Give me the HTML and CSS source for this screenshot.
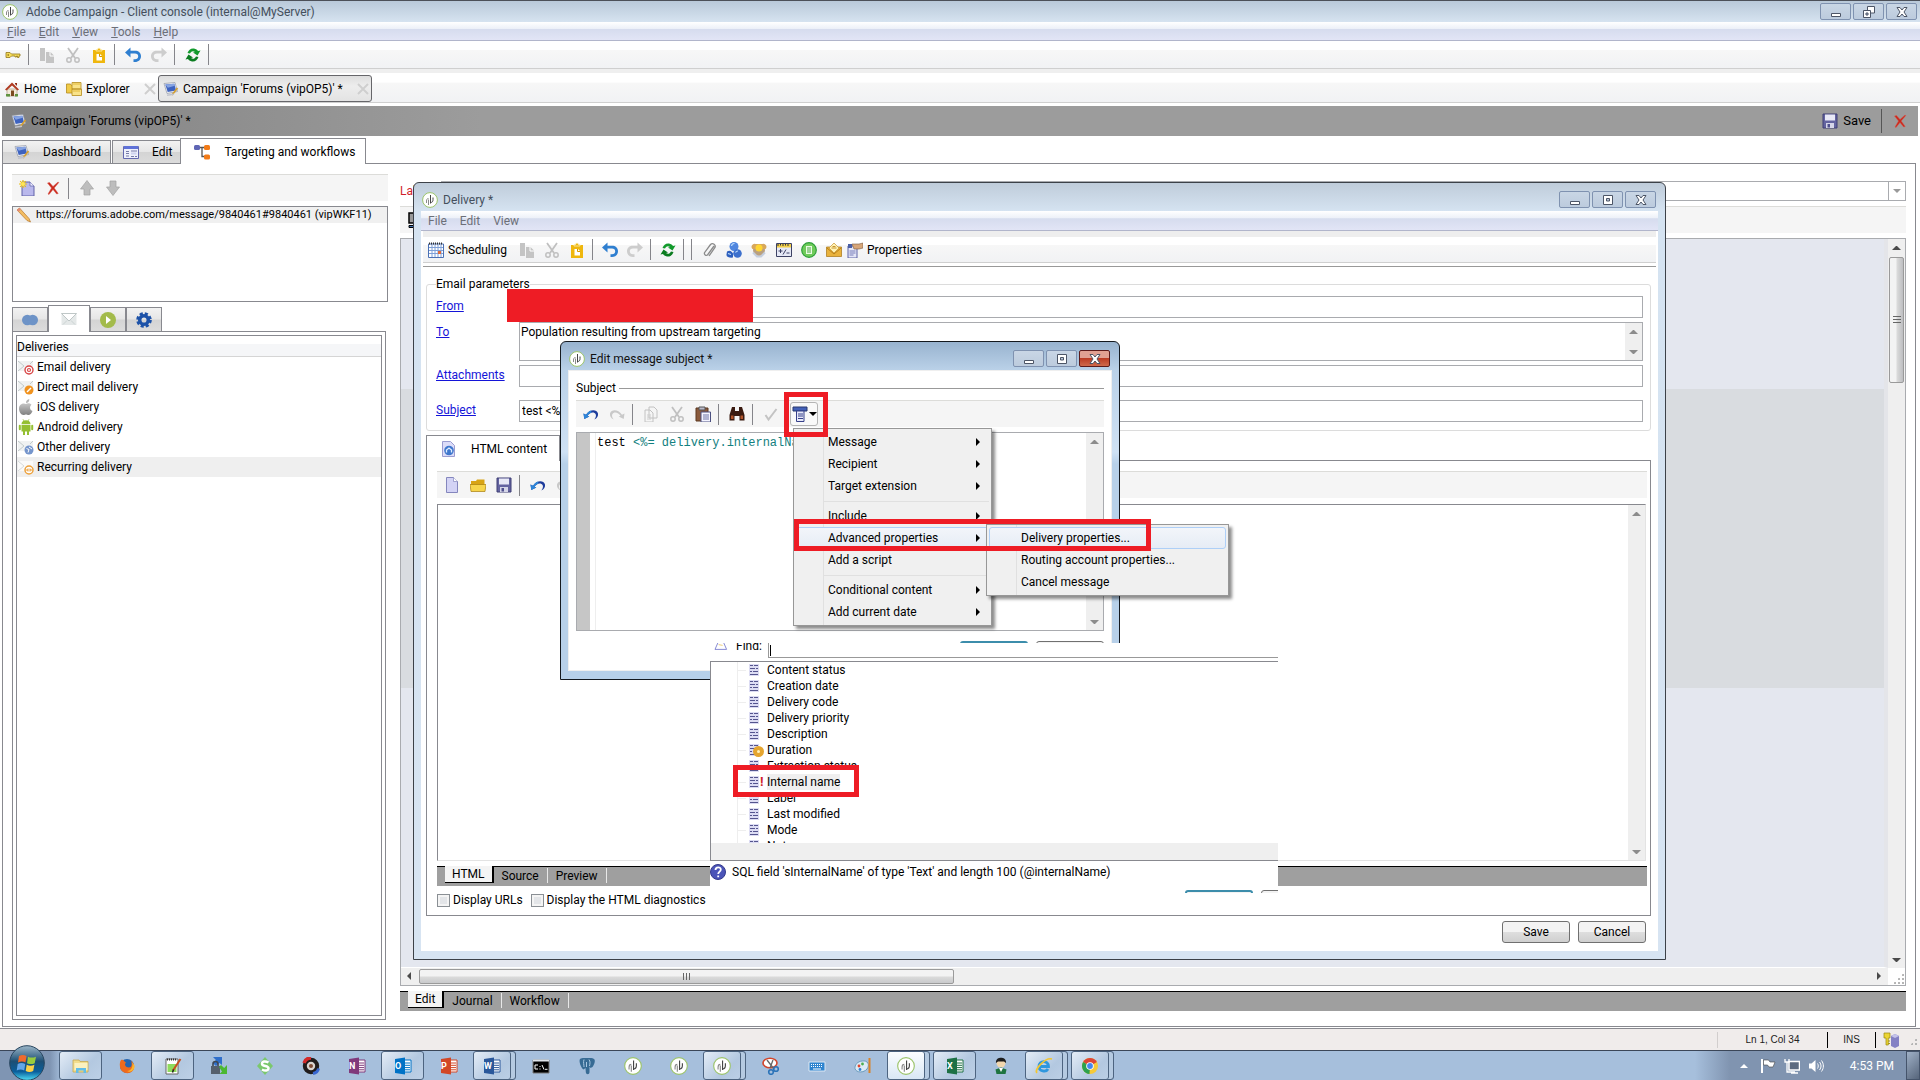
FILE: index.html
```html
<!DOCTYPE html>
<html lang="en">
<head>
    <meta charset="UTF-8">
    <title>Adobe Campaign - Client console</title>
    <link rel="stylesheet" href="styles.css">
</head>
<body>
    <svg class="sprite" aria-hidden="true">
        <defs>
            <linearGradient id="g-orb" x1="0" y1="0" x2="0" y2="1"><stop offset="0" stop-color="#9db7c9"/><stop offset=".45" stop-color="#1d4f74"/><stop offset=".75" stop-color="#0a5f9c"/><stop offset="1" stop-color="#4fe0f8"/></linearGradient>
            <linearGradient id="g-gray" x1="0" y1="0" x2="0" y2="1"><stop offset="0" stop-color="#c6c6c6"/><stop offset="1" stop-color="#808080"/></linearGradient>
        </defs>
        <symbol id="logo" viewBox="0 0 16 16"><circle cx="8" cy="8" r="7.4" fill="#fff" stroke="#9cc46a"/><path d="M8.500 3v8.500M8.500 10.500c2 0 2.500-1.200 2.500-3V5.500" fill="none" stroke="#444"/><path d="M6.500 13V7.500M6.500 6.500c-1.500 0-2 1-2 2.500v2" fill="none" stroke="#8a8a8a"/></symbol>
        <symbol id="key" viewBox="0 0 16 16"><path d="M1 5.500h4l1.500 1.500H15v2h-1v1.500h-1.500V9h-1v1h-1.500V9H6.500L5 10.500H1z" fill="#f5dc5a" stroke="#93761b" stroke-width=".8"/><path d="M2.500 7.300h1.500v1.500H2.500z" fill="#93761b"/></symbol>
        <symbol id="copy" viewBox="0 0 16 16"><path d="M1 1h5v13H1zM7 5h4.500L15 8.500V16H7z" fill="#c4c4c4"/><path d="M11 5v4h4" fill="none" stroke="#fff"/></symbol>
        <symbol id="cut" viewBox="0 0 16 16"><path d="M3 1l7 10M13 1L6 11" stroke="#c0c0c0" stroke-width="1.800"/><circle cx="4" cy="13" r="2.200" fill="none" stroke="#c0c0c0" stroke-width="1.500"/><circle cx="12" cy="13" r="2.200" fill="none" stroke="#c0c0c0" stroke-width="1.500"/></symbol>
        <symbol id="paste" viewBox="0 0 16 16"><path d="M2 3h12v13H2z" fill="#efb70e"/><path d="M5 4V2.500h1.500a1.500 1.500 0 0 1 3 0H11V4z" fill="#efb70e" stroke="#fff6cf" stroke-width=".7"/><path d="M5.500 7H9l2 2v4.500H5.500z" fill="#fff"/><path d="M8.500 7v2.500H11" fill="none" stroke="#d69a00"/></symbol>
        <symbol id="undo" viewBox="0 0 16 16"><path d="M0 5.500L5.500 .5v3.200H10c3.500 0 6 2 6 5.500 0 3.300-2.500 5.800-6 5.800H8.500v-2.800H10c2 0 3.200-1 3.200-2.900 0-1.800-1.200-2.700-3.200-2.700H5.500v3.900z" fill="#2f7fd0"/></symbol>
        <symbol id="redo" viewBox="0 0 16 16"><path d="M16 5.500L10.500.5v3.200H6c-3.500 0-6 2-6 5.500C0 12.500 2.500 15 6 15h1.500v-2.800H6c-2 0-3.200-1-3.200-2.900 0-1.800 1.200-2.700 3.200-2.700h4.500v3.900z" fill="#cdcdcd"/></symbol>
        <symbol id="refresh" viewBox="0 0 16 16"><path d="M2.500 6C3.500 3 6 1 9 1.500c2 .3 3.500 1.500 4 2.500l2.500-.5-3 5-4.500-3 2-.5C8.500 3.800 6.500 3.500 5 6.500z" fill="#129a2c"/><path d="M13.500 10c-1 3-3.500 5-6.500 4.500-2-.3-3.500-1.500-4-2.500l-2.500.5 3-5L8 10.500l-2 .5c1.500 1.200 3.500 1.500 5-1.500z" fill="#0b7c20"/></symbol>
        <symbol id="home" viewBox="0 0 16 16"><path d="M3 8h10v7H3z" fill="#f3ead9" stroke="#a08b70" stroke-width=".6"/><path d="M1 8.500L8 1.500l7 7-1.500 1L8 4.500 2.500 9.500z" fill="#b03a20"/><path d="M11 2h2v3l-2-2z" fill="#8e2c18"/><path d="M7 9.500h3V15H7z" fill="#7c4a20"/><path d="M2 13h4v2.500H2zM11 13h3v2.500h-3z" fill="#5f9440"/></symbol>
        <symbol id="explorer" viewBox="0 0 16 16"><path d="M.5 3h4l1 1.500h3V12h-8z" fill="#f0cb48" stroke="#b58c1c" stroke-width=".8"/><path d="M6 1.500h9V8H6zM6 8h9.500v6.500H6z" fill="#f9e38a" stroke="#b58c1c" stroke-width=".8"/><path d="M7 3h7M7 10h7" stroke="#e2b93c"/></symbol>
        <symbol id="campaign" viewBox="0 0 16 16"><path d="M1 2.500l11-1 2.500 9-10.500 2z" fill="#f2f3f7" stroke="#9298a5" stroke-width=".7"/><path d="M2.300 3.600l9-.8 1.800 6.800-8.400 1.500z" fill="#3e63c0"/><path d="M2.300 3.600l9-.8.5 2-7 2z" fill="#87a4e2"/><path d="M14.500 7L9 14" stroke="#d5a031" stroke-width="1.700"/><path d="M4 14.300l7-1" stroke="#c0c3cc" stroke-width="1.500"/></symbol>
        <symbol id="form" viewBox="0 0 16 16"><path d="M.5 2.500h15v12H.5z" fill="#eef0fb" stroke="#6469ae"/><path d="M1 2h14v3H1z" fill="#5f72d8"/><path d="M3 7.500h3M3 9.500h3M3 12h3M8 7h6M8 12.500h3m1 0h2" stroke="#767ba8"/><path d="M8 8.500h5.500v2H8z" fill="#cfd3ee"/></symbol>
        <symbol id="flow" viewBox="0 0 16 16"><path d="M5 3.500h6M8 3.500v9h4" fill="none" stroke="#555" stroke-width="1.300"/><rect y="1" width="6" height="5" rx="1.500" fill="#5f66b5"/><rect x="10" y="1" width="6" height="5" rx="1.500" fill="#f27b18"/><rect x="10" y="10.500" width="6" height="5" rx="1.500" fill="#f27b18"/></symbol>
        <symbol id="x" viewBox="0 0 16 16"><path d="M3 3l10 10M13 3L3 13" stroke="#cfcfcf" stroke-width="2"/></symbol>
        <symbol id="del" viewBox="0 0 16 16"><path d="M2.500 3l2-.5L8 6.500l5-4.500.8.500L9.200 8l4 5.500-1.500.5L8 9.500 4 14.500l-1-.5L6.500 8z" fill="#c9281c" stroke="#d8574a" stroke-width=".5"/></symbol>
        <symbol id="new" viewBox="0 0 16 16"><path d="M3 2h8l4 4v10H3z" fill="#b9b8ec" stroke="#6062a8"/><path d="M11 2v4h4" fill="#ecebff" stroke="#6062a8" stroke-width=".7"/><path d="M4 0v8M0 4h8M1.200 1.200l5.600 5.600M6.800 1.200L1.200 6.800" stroke="#e9bd12" stroke-width="1.200"/><circle cx="4" cy="4" r="2" fill="#ffe658"/></symbol>
        <symbol id="page" viewBox="0 0 16 16"><path d="M2.500 .5h7l4 4v11h-11z" fill="#d3d3f5" stroke="#8486bd"/><path d="M9.500 .5v4h4" fill="#fff" stroke="#8486bd" stroke-width=".7"/></symbol>
        <symbol id="up" viewBox="0 0 16 16"><path d="M8 .5L14.500 9H11v6H5V9H1.500z" fill="#bdbdbd" stroke="#a2a2a2" stroke-width=".7"/></symbol>
        <symbol id="down" viewBox="0 0 16 16"><path d="M8 15.500L14.500 7H11V1H5v6H1.500z" fill="#bdbdbd" stroke="#a2a2a2" stroke-width=".7"/></symbol>
        <symbol id="pencil" viewBox="0 0 16 16"><path d="M1 3l2.500-2L13 11.500l1.500 3.500-3.500-1.500z" fill="#f3bd62" stroke="#b4762c" stroke-width=".7"/><path d="M1 3l2.500-2 1.500 1.600L2.600 4.700z" fill="#e58b78"/></symbol>
        <symbol id="pills" viewBox="0 0 16 16"><circle cx="5.300" cy="8" r="5.300" fill="#6d93c7"/><circle cx="10.700" cy="8" r="5.300" fill="#6d93c7"/></symbol>
        <symbol id="mail" viewBox="0 0 16 16"><path d="M.5 2.500h15v11.500H.5z" fill="#e4e8e8"/><path d="M.5 2.500L8 10l7.500-7.500z" fill="#fff" stroke="#b0baba" stroke-width=".8"/><path d="M2 13.500l4-4M14 13.500l-4-4" stroke="#cbd3d3"/></symbol>
        <symbol id="play" viewBox="0 0 16 16"><circle cx="8" cy="8" r="8" fill="#a3bb4b"/><path d="M6 4l5 4-5 4z" fill="#fff"/></symbol>
        <symbol id="gear" viewBox="0 0 16 16"><circle cx="8" cy="8" r="6.300" fill="none" stroke="#1d52a8" stroke-width="3" stroke-dasharray="3 1.950"/><circle cx="8" cy="8" r="4.300" fill="none" stroke="#1d52a8" stroke-width="3.500"/></symbol>
        <symbol id="mail-at" viewBox="0 0 16 16"><path d="M0 2h15v10H0z" fill="#f0f2f2"/><path d="M0 2l6 5-6 5M15 2l-3 3" fill="none" stroke="#c2cbcb"/><circle cx="11" cy="11" r="4" fill="#fff" stroke="#d84444" stroke-width="1.400"/><circle cx="11" cy="11" r="1.500" fill="none" stroke="#d84444" stroke-width="1.200"/></symbol>
        <symbol id="mail-dm" viewBox="0 0 16 16"><path d="M0 2h15v10H0z" fill="#f0f2f2"/><path d="M0 2l6 5-6 5M15 2l-3 3" fill="none" stroke="#c2cbcb"/><circle cx="11" cy="11" r="4.500" fill="#f0921e"/><path d="M9 13l4-4" stroke="#fff" stroke-width="1.500"/></symbol>
        <symbol id="mail-other" viewBox="0 0 16 16"><path d="M0 2h15v10H0z" fill="#f0f2f2"/><path d="M0 2l6 5-6 5M15 2l-3 3" fill="none" stroke="#c2cbcb"/><circle cx="11" cy="11" r="4.500" fill="#7595cc"/><path d="M8.500 9.500l2.500 1-1 3M11 8l3 2" fill="none" stroke="#fff"/></symbol>
        <symbol id="mail-rec" viewBox="0 0 16 16"><path d="M0 2h15v10H0z" fill="#fafafa"/><path d="M0 2l6 5-6 5" fill="none" stroke="#d5dada"/><circle cx="11" cy="11" r="4" fill="#fff" stroke="#eda03a" stroke-width="1.500"/><path d="M8.500 11h5M10 9.500L8.700 11l1.300 1.500M12 9.500l1.300 1.500-1.300 1.500" fill="none" stroke="#eda03a"/></symbol>
        <symbol id="apple" viewBox="0 0 16 16"><path d="M8 5c1-.8 3.500-1.300 5.500.7-2.500 2-1.500 5.300 1 6.300-1 2.500-2.500 4-4 4-1 0-1.500-.5-2.500-.5S6.500 16 5.500 16C3 16 1 12.500 1 9.500 1 5 5.500 3.500 8 5z" fill="url(#g-gray)"/><path d="M8 4c0-2.500 1.500-3.700 3.300-4C11.400 2.500 10 4 8 4z" fill="#b5b5b5"/></symbol>
        <symbol id="android" viewBox="0 0 16 16"><path d="M3.500 5a4.500 3.800 0 0 1 9 0zM3.500 5.800h9v6.700h-9z" fill="#95bf33"/><rect x=".8" y="5.800" width="2" height="5.500" rx="1" fill="#95bf33"/><rect x="13.200" y="5.800" width="2" height="5.500" rx="1" fill="#95bf33"/><path d="M6 12v4M10 12v4" stroke="#95bf33" stroke-width="2"/><path d="M5 .3l1.200 2M11 .3L9.800 2.300" stroke="#95bf33" stroke-width=".8"/></symbol>
        <symbol id="floppy" viewBox="0 0 16 16"><path d="M1 1h14v14H1z" fill="#6464a0" stroke="#3e3e74"/><path d="M3 1.500h10v6H3z" fill="#e8e9f6"/><path d="M4 10h8v5H4z" fill="#d5d6e8"/><path d="M5.500 11h2.500v3.500H5.500z" fill="#50508e"/></symbol>
        <symbol id="folder" viewBox="0 0 16 16"><path d="M1 4h5l1-1.500h7.500V14H1z" fill="#d8a416"/><path d="M0 7.500h16L15 14.500H1z" fill="#f7d54c" stroke="#a77d0e" stroke-width=".7"/></symbol>
        <symbol id="calendar" viewBox="0 0 16 16"><path d="M.5 2h15v13.500H.5z" fill="#fff" stroke="#4a70b5"/><path d="M1 5.500h14M1 8.500h14M1 11.500h14M4 3v12M7 3v12M10 3v12M13 3v12" stroke="#7fa0d8"/><path d="M1 1.500h14" stroke="#333" stroke-width="2" stroke-dasharray="1 1"/><path d="M10 9h3v3h-3z" fill="#df6a3c"/></symbol>
        <symbol id="clip" viewBox="0 0 16 16"><path d="M13 4l-6.500 9a2 2 0 0 1-3-2.300L9.500 2.500a2.700 2.700 0 0 1 4.300 3.200L8 14" fill="none" stroke="#8a8a8a" stroke-width="1.300"/></symbol>
        <symbol id="people" viewBox="0 0 16 16"><circle cx="8" cy="4.500" r="4.500" fill="#4f86df"/><path d="M1 9.500c3-2 5 0 6 2v4c-3 .5-7-.5-6.500-3z" fill="#2d5fbe"/><circle cx="11.500" cy="11.500" r="4.300" fill="#3c70cd"/><path d="M5.500 4a3 3 0 0 1 3-2.500M9.500 10.500a3 3 0 0 1 2.500-1.500M2 11.500l3 1" stroke="#bfe0ff" stroke-width="1.200" fill="none"/></symbol>
        <symbol id="sun" viewBox="0 0 16 16"><circle cx="8" cy="8" r="6" fill="#b9a080"/><path d="M1.500 7a3 3 0 0 1 3-5h7a3 3 0 0 1 3 5" fill="#d8a85c"/><circle cx="8" cy="6" r="3.500" fill="#ffd633"/><path d="M2 10.500l4 4h4l4-4" fill="none" stroke="#c4cede" stroke-width="2"/></symbol>
        <symbol id="calc" viewBox="0 0 16 16"><path d="M.5 1.500h15v13H.5z" fill="#e6e9f6" stroke="#3d4264"/><path d="M1 2h14v3.500H1z" fill="#f2cf4a"/><path d="M2 2v2M4.500 2v1.500M7 2v2M9.500 2v1.500M12 2v2" stroke="#333"/><path d="M2.500 9h4M4.500 7v4M7 12.500l3-5M10.500 11h3" stroke="#3d4264"/></symbol>
        <symbol id="green" viewBox="0 0 16 16"><circle cx="8" cy="8" r="7.300" fill="#6fcb5a" stroke="#2e9f3a" stroke-width="1.200"/><path d="M5 4h6v8H5z" fill="#eafbe4"/><path d="M6 6h4M6 8h4M6 10h4" stroke="#49a83f"/></symbol>
        <symbol id="envelope" viewBox="0 0 16 16"><path d="M.5 5h15v9.500H.5z" fill="#e9b23c" stroke="#a87412" stroke-width=".7"/><path d="M3 6L8 1l5 5-5 5z" fill="#fff3b5" stroke="#c79430" stroke-width=".7"/><path d="M5.500 6h5M6.500 4.500h3" stroke="#c79430"/><path d="M1 6l7 6 7-6" fill="none" stroke="#b98018"/></symbol>
        <symbol id="props" viewBox="0 0 16 16"><path d="M1 4h9v12H1z" fill="#e3e5f7" stroke="#5d62a5"/><path d="M2.500 9h6M2.500 11h6M2.500 13h4" stroke="#777cb8"/><path d="M5 2h7l4-1v5l-4 1H7z" fill="#d7a679" stroke="#7b5b40" stroke-width=".6"/><path d="M1 2h4v4H1z" fill="#4a5fa5"/></symbol>
        <symbol id="htmlpage" viewBox="0 0 16 16"><path d="M2.500 .5h8l4 4v11h-12z" fill="#dcdcf8" stroke="#9a9cd0"/><circle cx="9" cy="9.500" r="4.800" fill="#3f77cd"/><path d="M6.500 11.500V9L9 7l2.500 2v2.500" fill="none" stroke="#e0edff" stroke-width="1.300"/></symbol>
        <symbol id="undo2" viewBox="0 0 16 16"><path d="M.5 7.500l.8 5.500 5-2.500-1.800-.8C6.500 6.500 11 5 12.800 8.500c.5 1.500-.2 3.500-1.500 5C14 12.500 15.500 10 15 7.500 13.500 3 7 3 3 8.700z" fill="#1d3c9c"/><path d="M.5 7.500l.8 5.500 5-2.500-1.800-.8C5.500 8.200 7 7 8.500 6.500L8 4.500C6 5 4.500 6.500 3 8.700z" fill="#2f86d8"/></symbol>
        <symbol id="redo2" viewBox="0 0 16 16"><path d="M15.500 7.500l-.8 5.500-5-2.500 1.800-.8C9.500 6.500 5 5 3.200 8.500c-.5 1.500.2 3.500 1.500 5C2 12.500.5 10 1 7.500 2.500 3 9 3 13 8.700z" fill="#c9c9c9"/></symbol>
        <symbol id="copy2" viewBox="0 0 16 16"><path d="M6 1h5l3 3v8H6zM2 4h5l3 3v9H2z" fill="#f5f5f5" stroke="#c2c2c2"/><path d="M4 9h4M4 11h4M4 13h4" stroke="#ccc"/></symbol>
        <symbol id="paste2" viewBox="0 0 16 16"><path d="M1 2h12v13H1z" fill="#8a5a3c" stroke="#5d3920"/><path d="M4 1h6v3H4z" fill="#b9b9c9" stroke="#555"/><path d="M6 6h9.500v10H6z" fill="#f4f4ff" stroke="#4c5080"/><path d="M8 9h6M8 11h6M8 13h6" stroke="#6f74a5"/></symbol>
        <symbol id="binoc" viewBox="0 0 16 16"><path d="M3 1h3v4h4V1h3l2.500 8v5.500h-5V10h-5v4.500h-5V9z" fill="#3a1a10"/><path d="M2 9.500h2.500V13H2zM11.500 9.500H14V13h-2.500z" fill="#b3542a"/></symbol>
        <symbol id="check" viewBox="0 0 16 16"><path d="M2.500 9l3 4.500L13.500 3" fill="none" stroke="#c3c3c3" stroke-width="2"/></symbol>
        <symbol id="field" viewBox="0 0 16 16"><path d="M1 1h14v4H1z" fill="#4361b8" stroke="#28396f"/><path d="M4.500 5h7.500v10.500H4.500z" fill="#e7e9f8" stroke="#37408a"/><path d="M6 8h5M6 10h5M6 12.500h5" stroke="#37408a"/></symbol>
        <symbol id="attr" viewBox="0 0 10 12"><path d="M0 0h10v12H0z" fill="#dcdcf3"/><path d="M1 1.500h3m1 0h4M1 4.500h5m1 0h2M1 7.500h2m1 0h5M1 10.500h8" stroke="#55558f"/></symbol>
        <symbol id="help" viewBox="0 0 16 16"><circle cx="8" cy="8" r="7.500" fill="#4b54b8" stroke="#343a8c"/><path d="M5.500 6c0-3.500 5.500-3.500 5.300-.3C10.700 7.500 8.200 7.800 8.200 10M8.200 11.500v1.800" fill="none" stroke="#fff" stroke-width="1.800"/></symbol>
        <symbol id="bell" viewBox="0 0 16 10"><path d="M4 0l-3.500 8h14.500L11.500 0" fill="#fff" stroke="#6a6fc8"/><path d="M5 2l5 1" stroke="#e9c35c"/></symbol>
        <symbol id="monitor" viewBox="0 0 16 16"><path d="M1 1h14v10H1z" fill="#999" stroke="#000" stroke-width="1.500"/><path d="M1 13.500h14v2H1z" fill="#3d6fb0" stroke="#000"/></symbol>
        <symbol id="win-min" viewBox="0 0 14 12"><path d="M2.500 7.500h9v3h-9z" fill="#fff" stroke="#4c5566"/></symbol>
        <symbol id="win-max" viewBox="0 0 14 12"><path d="M2.500 1.500h9v9h-9z" fill="#fff" stroke="#4c5566"/><path d="M5.500 4.500h3v2.500h-3z" fill="#b9c6d8" stroke="#4c5566"/></symbol>
        <symbol id="win-rest" viewBox="0 0 14 12"><path d="M5.500 .5h7v6.500h-7z" fill="#fff" stroke="#4c5566"/><path d="M1.500 4.500h7v7h-7z" fill="#fff" stroke="#4c5566"/><path d="M4 7h2v2H4z" fill="#b9c6d8" stroke="#4c5566"/></symbol>
        <symbol id="win-x" viewBox="0 0 14 12"><path d="M2 1.500h3l2 2.500 2-2.500h3L9 6l3 4.500H9L7 8l-2 2.500H2L5 6z" fill="#fff" stroke="#4c5566"/></symbol>
        <symbol id="orb" viewBox="0 0 36 36"><circle cx="18" cy="18" r="17.300" fill="url(#g-orb)" stroke="#28455e"/><path d="M10 11c2.500-1.300 5-1.300 7.500 0l-1 6.500c-2.500-1.300-5-1.200-7.500 0z" fill="#ef6a2c"/><path d="M19 11.700c2.500 1.200 5 1.200 8 0l-1.300 6.500c-2.500 1.200-5 1.100-7.700 0z" fill="#98cb3e"/><path d="M8.700 19c2.500-1.200 5-1.200 7.500 0l-1 6.500c-2.500-1.200-5-1.200-7.500 0z" fill="#62a6e8"/><path d="M17.700 19.800c2.500 1.200 5 1.200 7.700 0L24.200 26c-2.500 1.200-5 1.200-7.500 0z" fill="#fbd148"/></symbol>
        <symbol id="t-files" viewBox="0 0 18 18"><path d="M1 3h6l1 1.500h8V15H1z" fill="#f2dd8d" stroke="#c7a851" stroke-width=".8"/><path d="M2.500 6h13v7h-13z" fill="#fbf1bf"/><path d="M4 16v-5h10v5h-2.500v-2.500h-5V16z" fill="#62bde8"/></symbol>
        <symbol id="t-fox" viewBox="0 0 18 18"><circle cx="9" cy="9" r="7" fill="#2565b0"/><path d="M3 3c3-1 3 2 5 2.500C6 7 7 10.500 11 10.500c2.500 0 3.500-3 2-7C17 7 17 12 14 14.500 10 18 3 16 2 10 1.500 7 2 4.500 3 3z" fill="#ee6a1e"/><path d="M14 5c1.500 4-.5 9-5 9 4 2 8-1 7.500-5.500z" fill="#fbb62f"/></symbol>
        <symbol id="t-note" viewBox="0 0 18 18"><path d="M2 2h12v15H2z" fill="#fff" stroke="#666"/><path d="M3.500 7h9v8h-9z" fill="#8edb5c"/><path d="M3 2.500h10" stroke="#333" stroke-width="2" stroke-dasharray="1 1"/><path d="M16.500 2L9 13.500" stroke="#c8501f" stroke-width="2"/><path d="M9.500 12.500l-1 3" stroke="#222" stroke-width="1.500"/></symbol>
        <symbol id="t-scp" viewBox="0 0 18 18"><path d="M3 0h9v8L9.500 6 6 9 2.500 6 6 3z" fill="#2f6fcb"/><path d="M1 9h9v8H1z" fill="#55606e"/><path d="M3 9V7a2.500 2.500 0 0 1 5 0v2" fill="none" stroke="#3f4854" stroke-width="1.600"/><path d="M17 8v9H9.500l2.500-2.500L9 10l2-2 3.200 3z" fill="#4bb832"/></symbol>
        <symbol id="t-s" viewBox="0 0 18 18"><path d="M9 0l8 9-8 9-8-9z" fill="#7bc86d"/><path d="M12.500 5.500C9 3.500 6 4.500 6 6.700c0 3 6.500 1.700 6.500 4.600 0 2.500-3.500 3-6.500 1.200" fill="none" stroke="#fff" stroke-width="2.500"/></symbol>
        <symbol id="t-ring" viewBox="0 0 18 18"><circle cx="9" cy="9" r="6.200" fill="#d8d3cf" stroke="#201c1c" stroke-width="4"/><path d="M2 6c1-3 4-5 7-5" stroke="#d22a2a" stroke-width="3.500" fill="none"/><path d="M11 16.500c3-.5 5-2.500 5.500-5" stroke="#3867d0" stroke-width="3" fill="none"/><circle cx="9" cy="9" r="2" fill="#7e4a32"/></symbol>
        <symbol id="t-doc" viewBox="0 0 18 18"><path d="M8 3h9v12H8z" fill="#fff" stroke="currentColor"/><path d="M11 6h5M11 8.300h5M11 10.600h5M11 12.800h5" stroke="currentColor"/><path d="M1 2l10-1.500v17L1 16z" fill="currentColor"/></symbol>
        <symbol id="t-cmd" viewBox="0 0 18 18"><path d="M1 3h16v13H1z" fill="#000" stroke="#777"/><path d="M1 2.500h16v2H1z" fill="#dfe4ea"/><path d="M6 8H3v4h3M8 9v1M8 11.500v1M10 8l2 4.500M13 12.300h2.500" stroke="#fff" fill="none"/></symbol>
        <symbol id="t-pg" viewBox="0 0 18 18"><path d="M2 2c2-1.500 4-1 7-1s6-.5 7.500 1.500c1 2-.5 5.500-2 7.500L12.500 11l-1-1.500V15c0 3-3.500 3-3.700 0L7.500 11 5.500 12.500C3 11 .5 4 2 2z" fill="#376b94"/><path d="M6 2.500c-1 3 0 5 0 7.500M11 2.500c1.500 2 1 4 .5 6.500M8.500 5v5" fill="none" stroke="#a9c7e0"/></symbol>
        <symbol id="t-snip" viewBox="0 0 18 18"><ellipse cx="8" cy="6" rx="7" ry="4.700" fill="#fff" stroke="#d2452b" stroke-width="1.600"/><path d="M5 3l7 9M11 3l-3 8" stroke="#666" stroke-width="1.300"/><circle cx="14" cy="12" r="2.300" fill="none" stroke="#2b73b8" stroke-width="1.600"/><circle cx="9" cy="15" r="2.300" fill="none" stroke="#2b73b8" stroke-width="1.600"/></symbol>
        <symbol id="t-kbd" viewBox="0 0 18 18"><path d="M1 5h16v9H1z" fill="#2e84cf" stroke="#dbe7f3"/><path d="M3 7.500h12M3 9.500h12" stroke="#fff" stroke-dasharray="1 1"/><path d="M5 12h8" stroke="#fff"/></symbol>
        <symbol id="t-paint" viewBox="0 0 18 18"><path d="M8 4c6-1 8 4 5 8-3 4-11 4-12-.5C.5 8 3.500 4.500 8 4z" fill="#dcebf5" stroke="#6b9bbd"/><circle cx="5" cy="9" r="1.400" fill="#e0452e"/><circle cx="8.500" cy="7" r="1.400" fill="#4cae4f"/><circle cx="6" cy="12.500" r="1.400" fill="#2f7ed0"/><path d="M15.500 1v15" stroke="#d9832a" stroke-width="2"/></symbol>
        <symbol id="t-person" viewBox="0 0 18 18"><circle cx="9" cy="6" r="4.500" fill="#f2d7ae"/><path d="M4 6C3-1 15-1 14 6l-2-1.500H6z" fill="#1d1d1d"/><path d="M3.500 12.500L9 10.500l5.500 2-1 4.500h-9z" fill="#1e7440"/><path d="M7 11l2 4 2-4z" fill="#fff"/></symbol>
        <symbol id="t-ie" viewBox="0 0 18 18"><path d="M4 9.500h9.500C13.500 3 4 3 4 9.500c0 5 7 6 9 2.500" fill="none" stroke="#2f97de" stroke-width="2.800"/><path d="M2 16C-1 13 10 0 17 2" fill="none" stroke="#f3c631" stroke-width="1.700"/></symbol>
        <symbol id="t-chrome" viewBox="0 0 18 18"><circle cx="9" cy="9" r="8" fill="#f7ca38"/><path d="M9 9L2.100 5a8 8 0 0 1 13.800 0z" fill="#dd4636"/><path d="M9 9L2.100 5A8 8 0 0 0 8.500 17z" fill="#2da14e"/><circle cx="9" cy="9" r="3.800" fill="#fff"/><circle cx="9" cy="9" r="2.900" fill="#4487ef"/></symbol>
        <symbol id="s-flag" viewBox="0 0 16 16"><path d="M2 1v14" stroke="#fff" stroke-width="2"/><path d="M3.500 2h5l1.500 2h5l-2 5H9L7.500 7h-4z" fill="#fff" stroke="#444" stroke-width=".6"/></symbol>
        <symbol id="s-net" viewBox="0 0 16 16"><path d="M5 3.500h10.500V12H5z" fill="#5d6b80" stroke="#fff" stroke-width="1.500"/><path d="M1 1v3h4V1M3 4v10h8M7 15h7" fill="none" stroke="#fff" stroke-width="1.300"/></symbol>
        <symbol id="s-vol" viewBox="0 0 16 16"><path d="M1 5.500h2.500L7.500 2v12L3.500 10.500H1z" fill="#fff"/><path d="M9.500 5.500c1 1.500 1 3.500 0 5M11.500 4c2 2.500 2 5.500 0 8M13.500 2.500c2.500 3.500 2.500 7.500 0 11" fill="none" stroke="#fff"/></symbol>
        <symbol id="s-keydb" viewBox="0 0 16 16"><path d="M8 4l4-2 4 2v10l-4 2-4-2z" fill="#8481c4"/><path d="M8 4l4 2 4-2-4-2z" fill="#c5c3ea"/><path d="M1 1h6v5H5.300v7H3V6H1z" fill="#ecd534" stroke="#9a8613" stroke-width=".7"/><path d="M5 9h2M5 11.500h2" stroke="#ad9716"/></symbol>
    </svg>

    <div class="app">
        <header class="titlebar main-title">
            <svg class="icon"><use href="#logo"/></svg>
            <span class="title-text">Adobe Campaign - Client console (internal@MyServer)</span>
            <div class="win-buttons">
                <button aria-label="Minimize"><svg><use href="#win-min"/></svg></button>
                <button aria-label="Restore"><svg><use href="#win-rest"/></svg></button>
                <button aria-label="Close"><svg><use href="#win-x"/></svg></button>
            </div>
        </header>
        <nav class="menubar main-menu">
            <button><u>F</u>ile</button><button><u>E</u>dit</button><button><u>V</u>iew</button><button><u>T</u>ools</button><button><u>H</u>elp</button>
        </nav>
        <div class="toolbar glossy main-toolbar">
            <button aria-label="Connect"><svg class="icon"><use href="#key"/></svg></button><i class="sep"></i>
            <button aria-label="Copy"><svg class="icon"><use href="#copy"/></svg></button>
            <button aria-label="Cut"><svg class="icon"><use href="#cut"/></svg></button>
            <button aria-label="Paste"><svg class="icon"><use href="#paste"/></svg></button><i class="sep"></i>
            <button aria-label="Undo"><svg class="icon"><use href="#undo"/></svg></button>
            <button aria-label="Redo"><svg class="icon"><use href="#redo"/></svg></button><i class="sep"></i>
            <button aria-label="Refresh"><svg class="icon"><use href="#refresh"/></svg></button><i class="sep"></i>
        </div>
        <nav class="doc-tabs glossy">
            <button class="doc-home"><svg class="icon"><use href="#home"/></svg>Home</button>
            <button class="doc-explorer"><svg class="icon"><use href="#explorer"/></svg>Explorer<svg class="icon"><use href="#x"/></svg></button>
            <button class="doc-current"><svg class="icon"><use href="#campaign"/></svg>Campaign 'Forums (vipOP5)' *<svg class="icon"><use href="#x"/></svg></button>
        </nav>
        <div class="doc-bar">
            <svg class="icon"><use href="#campaign"/></svg>
            <h1>Campaign 'Forums (vipOP5)' *</h1>
            <button class="doc-save"><svg class="icon"><use href="#floppy"/></svg>Save</button>
            <button class="doc-close" aria-label="Close"><svg class="icon"><use href="#del"/></svg></button>
        </div>
        <div class="tabs">
            <button><svg class="icon"><use href="#campaign"/></svg>Dashboard</button>
            <button><svg class="icon"><use href="#form"/></svg>Edit</button>
            <button class="active"><svg class="icon"><use href="#flow"/></svg>Targeting and workflows</button>
        </div>
        <main class="workspace">
            <section class="sidebar">
                <div class="toolbar flat">
                    <button aria-label="New"><svg class="icon"><use href="#new"/></svg></button>
                    <button aria-label="Delete"><svg class="icon"><use href="#del"/></svg></button><i class="sep"></i>
                    <button aria-label="Move up"><svg class="icon"><use href="#up"/></svg></button>
                    <button aria-label="Move down"><svg class="icon"><use href="#down"/></svg></button>
                </div>
                <ul class="workflow-list">
                    <li><svg class="icon"><use href="#pencil"/></svg>https://forums.adobe.com/message/9840461#9840461 (vipWKF11)</li>
                </ul>
                <div class="palette-tabs">
                    <button aria-label="Targeting"><svg class="icon"><use href="#pills"/></svg></button>
                    <button class="active" aria-label="Deliveries"><svg class="icon"><use href="#mail"/></svg></button>
                    <button aria-label="Flow control"><svg class="icon"><use href="#play"/></svg></button>
                    <button aria-label="Actions"><svg class="icon"><use href="#gear"/></svg></button>
                </div>
                <div class="palette">
                    <div class="palette-inner">
                        <h2>Deliveries</h2>
                        <ul>
                            <li><svg class="icon"><use href="#mail-at"/></svg>Email delivery</li>
                            <li><svg class="icon"><use href="#mail-dm"/></svg>Direct mail delivery</li>
                            <li><svg class="icon"><use href="#apple"/></svg>iOS delivery</li>
                            <li><svg class="icon"><use href="#android"/></svg>Android delivery</li>
                            <li><svg class="icon"><use href="#mail-other"/></svg>Other delivery</li>
                            <li class="selected"><svg class="icon"><use href="#mail-rec"/></svg>Recurring delivery</li>
                        </ul>
                    </div>
                </div>
            </section>
            <section class="diagram">
                <div class="label-row">
                    <label for="wf-label">Label</label>
                    <div class="combo"><select id="wf-label"><option></option></select><i class="tri"></i></div>
                </div>
                <div class="toolbar flat"><button aria-label="Display"><svg class="icon"><use href="#monitor"/></svg></button></div>
                <div class="canvas">
                    <div class="canvas-area"></div>
                    <div class="scroll-v dark">
                        <button class="arrow up" aria-label="Scroll up"></button>
                        <div class="thumb"></div>
                        <button class="arrow down" aria-label="Scroll down"></button>
                    </div>
                    <div class="scroll-h">
                        <button class="arrow left" aria-label="Scroll left"></button>
                        <div class="thumb"></div>
                        <button class="arrow right" aria-label="Scroll right"></button>
                    </div>
                    <div class="grip"></div>
                </div>
                <div class="bottom-tabs"><button class="active">Edit</button><button>Journal</button><button>Workflow</button></div>
            </section>
        </main>
        <footer class="statusbar">
            <span class="st-pos">Ln 1, Col 34</span><span class="st-ins">INS</span>
            <span class="st-icon"><svg class="icon"><use href="#s-keydb"/></svg></span><span class="grip"></span>
        </footer>
        <div class="taskbar">
            <button class="start" aria-label="Start"><svg><use href="#orb"/></svg></button>
            <button class="open" aria-label="Files"><svg><use href="#t-files"/></svg></button>
            <button aria-label="Firefox"><svg><use href="#t-fox"/></svg></button>
            <button class="open" aria-label="Notepad"><svg><use href="#t-note"/></svg></button>
            <button aria-label="WinSCP"><svg><use href="#t-scp"/></svg></button>
            <button aria-label="Snagit"><svg><use href="#t-s"/></svg></button>
            <button aria-label="Recorder"><svg><use href="#t-ring"/></svg></button>
            <button class="office onenote"><svg><use href="#t-doc"/></svg><b>N</b></button>
            <button class="office outlook open"><svg><use href="#t-doc"/></svg><b>O</b></button>
            <button class="office powerpoint"><svg><use href="#t-doc"/></svg><b>P</b></button>
            <button class="office word open stack"><svg><use href="#t-doc"/></svg><b>W</b></button>
            <button aria-label="Command prompt"><svg><use href="#t-cmd"/></svg></button>
            <button aria-label="PostgreSQL"><svg><use href="#t-pg"/></svg></button>
            <button aria-label="Campaign"><svg><use href="#logo"/></svg></button>
            <button aria-label="Campaign"><svg><use href="#logo"/></svg></button>
            <button class="open stack" aria-label="Campaign"><svg><use href="#logo"/></svg></button>
            <button aria-label="Snipping tool"><svg><use href="#t-snip"/></svg></button>
            <button aria-label="Keyboard"><svg><use href="#t-kbd"/></svg></button>
            <button aria-label="Paint"><svg><use href="#t-paint"/></svg></button>
            <button class="open stack current" aria-label="Campaign"><svg><use href="#logo"/></svg></button>
            <button class="office excel open"><svg><use href="#t-doc"/></svg><b>X</b></button>
            <button aria-label="Contacts"><svg><use href="#t-person"/></svg></button>
            <button class="open stack" aria-label="Internet Explorer"><svg><use href="#t-ie"/></svg></button>
            <button class="open stack" aria-label="Chrome"><svg><use href="#t-chrome"/></svg></button>
            <div class="tray">
                <i class="tri"></i>
                <svg class="icon"><use href="#s-flag"/></svg>
                <svg class="icon"><use href="#s-net"/></svg>
                <svg class="icon"><use href="#s-vol"/></svg>
                <time>4:53 PM</time>
                <button class="show-desktop" aria-label="Show desktop"></button>
            </div>
        </div>
    </div>

    <!-- Delivery window -->
    <section class="window delivery">
        <header class="titlebar">
            <svg class="icon"><use href="#logo"/></svg><span class="title-text">Delivery *</span>
            <div class="win-buttons">
                <button aria-label="Minimize"><svg><use href="#win-min"/></svg></button>
                <button aria-label="Maximize"><svg><use href="#win-max"/></svg></button>
                <button aria-label="Close"><svg><use href="#win-x"/></svg></button>
            </div>
        </header>
        <div class="client">
            <nav class="menubar"><button>File</button><button>Edit</button><button>View</button></nav>
            <div class="toolbar glossy">
                <button class="wide"><svg class="icon"><use href="#calendar"/></svg>Scheduling</button>
                <button aria-label="Copy"><svg class="icon"><use href="#copy"/></svg></button>
                <button aria-label="Cut"><svg class="icon"><use href="#cut"/></svg></button>
                <button aria-label="Paste"><svg class="icon"><use href="#paste"/></svg></button><i class="sep"></i>
                <button aria-label="Undo"><svg class="icon"><use href="#undo"/></svg></button>
                <button aria-label="Redo"><svg class="icon"><use href="#redo"/></svg></button><i class="sep"></i>
                <button aria-label="Refresh"><svg class="icon"><use href="#refresh"/></svg></button><i class="sep"></i><i class="sep"></i>
                <button aria-label="Attachments"><svg class="icon"><use href="#clip"/></svg></button>
                <button aria-label="Recipients"><svg class="icon"><use href="#people"/></svg></button>
                <button aria-label="Tracking"><svg class="icon"><use href="#sun"/></svg></button>
                <button aria-label="Variables"><svg class="icon"><use href="#calc"/></svg></button>
                <button aria-label="Budget"><svg class="icon"><use href="#green"/></svg></button>
                <button aria-label="Mail"><svg class="icon"><use href="#envelope"/></svg></button>
                <button class="wide"><svg class="icon"><use href="#props"/></svg>Properties</button>
            </div>
            <form class="delivery-body">
                <fieldset>
                    <legend>Email parameters</legend>
                    <a href="#">From</a><input type="text" aria-label="From">
                    <a href="#">To</a>
                    <div class="to-box">
                        <textarea aria-label="To">Population resulting from upstream targeting</textarea>
                        <div class="scroll-v"><button type="button" class="arrow up" aria-label="Scroll up"></button><button type="button" class="arrow down" aria-label="Scroll down"></button></div>
                    </div>
                    <a href="#">Attachments</a><input type="text" aria-label="Attachments">
                    <a href="#" class="spaced">Subject</a><input class="spaced" type="text" aria-label="Subject" value="test &lt;%= delivery.internalName %&gt;">
                </fieldset>
                <div class="content-tabs">
                    <button type="button" class="active"><svg class="icon"><use href="#htmlpage"/></svg>HTML content</button>
                </div>
                <div class="content-panel">
                    <div class="toolbar flat">
                        <button type="button" aria-label="New"><svg class="icon"><use href="#page"/></svg></button>
                        <button type="button" aria-label="Open"><svg class="icon"><use href="#folder"/></svg></button>
                        <button type="button" aria-label="Save"><svg class="icon"><use href="#floppy"/></svg></button><i class="sep"></i>
                        <button type="button" aria-label="Undo"><svg class="icon"><use href="#undo2"/></svg></button>
                        <button type="button" aria-label="Redo"><svg class="icon"><use href="#redo2"/></svg></button>
                    </div>
                    <div class="html-editor">
                        <div class="scroll-v"><button type="button" class="arrow up" aria-label="Scroll up"></button><button type="button" class="arrow down" aria-label="Scroll down"></button></div>
                    </div>
                    <div class="bottom-tabs"><button type="button" class="active">HTML</button><button type="button">Source</button><button type="button">Preview</button></div>
                    <div class="checks">
                        <label><input type="checkbox">Display URLs</label>
                        <label><input type="checkbox">Display the HTML diagnostics</label>
                    </div>
                </div>
                <div class="dialog-buttons"><button type="button" class="push">Save</button><button type="button" class="push">Cancel</button></div>
            </form>
        </div>
    </section>
    <div class="redacted"></div>

    <!-- Subject editor -->
    <section class="window subject-dialog">
        <header class="titlebar">
            <svg class="icon"><use href="#logo"/></svg><span class="title-text">Edit message subject *</span>
            <div class="win-buttons">
                <button aria-label="Minimize"><svg><use href="#win-min"/></svg></button>
                <button aria-label="Maximize"><svg><use href="#win-max"/></svg></button>
                <button class="close" aria-label="Close"><svg><use href="#win-x"/></svg></button>
            </div>
        </header>
        <div class="client">
            <h2 class="rule-title">Subject</h2>
            <div class="toolbar flat">
                <button aria-label="Undo"><svg class="icon"><use href="#undo2"/></svg></button>
                <button aria-label="Redo"><svg class="icon"><use href="#redo2"/></svg></button><i class="sep"></i>
                <button aria-label="Copy"><svg class="icon"><use href="#copy2"/></svg></button>
                <button aria-label="Cut"><svg class="icon"><use href="#cut"/></svg></button>
                <button aria-label="Paste"><svg class="icon"><use href="#paste2"/></svg></button><i class="sep"></i>
                <button aria-label="Find"><svg class="icon"><use href="#binoc"/></svg></button><i class="sep"></i>
                <button aria-label="Check"><svg class="icon"><use href="#check"/></svg></button>
                <button class="split" aria-label="Insert field"><svg class="icon"><use href="#field"/></svg><i class="tri"></i></button>
            </div>
            <div class="code">
                <code>test <span>&lt;%= delivery.internalName %&gt;</span></code>
                <div class="scroll-v"><button class="arrow up" aria-label="Scroll up"></button><button class="arrow down" aria-label="Scroll down"></button></div>
            </div>
            <div class="dialog-buttons"><button class="push default">OK</button><button class="push">Cancel</button></div>
        </div>
        <ul class="menu insert-menu">
            <li class="sub">Message</li>
            <li class="sub">Recipient</li>
            <li class="sub">Target extension</li>
            <li class="line"></li>
            <li class="sub">Include</li>
            <li class="sub hot">Advanced properties</li>
            <li>Add a script</li>
            <li class="line"></li>
            <li class="sub">Conditional content</li>
            <li class="sub">Add current date</li>
        </ul>
        <ul class="menu sub-menu">
            <li class="hot">Delivery properties...</li>
            <li>Routing account properties...</li>
            <li>Cancel message</li>
        </ul>
    </section>

    <!-- Field picker -->
    <section class="picker">
        <div class="find-row">
            <svg><use href="#bell"/></svg>
            <label for="find">Find:</label>
            <div class="find-box"><input id="find" type="text"></div>
        </div>
        <div class="tree-box">
            <ul class="tree">
                <li><svg><use href="#attr"/></svg>Content status</li>
                <li><svg><use href="#attr"/></svg>Creation date</li>
                <li><svg><use href="#attr"/></svg>Delivery code</li>
                <li><svg><use href="#attr"/></svg>Delivery priority</li>
                <li><svg><use href="#attr"/></svg>Description</li>
                <li class="computed"><svg><use href="#attr"/></svg>Duration</li>
                <li><svg><use href="#attr"/></svg>Extraction status</li>
                <li class="required"><svg><use href="#attr"/></svg><mark>Internal name</mark></li>
                <li><svg><use href="#attr"/></svg>Label</li>
                <li><svg><use href="#attr"/></svg>Last modified</li>
                <li><svg><use href="#attr"/></svg>Mode</li>
                <li><svg><use href="#attr"/></svg>Notes</li>
            </ul>
            <div class="tree-foot"></div>
        </div>
        <p><svg class="icon"><use href="#help"/></svg>SQL field 'sInternalName' of type 'Text' and length 100 (@internalName)</p>
        <div class="dialog-buttons"><button class="push default">OK</button><button class="push">Cancel</button></div>
    </section>

    <div class="callout callout-button"></div>
    <div class="callout callout-menu"></div>
    <div class="callout callout-field"></div>
</body>
</html>
```
FILE: styles.css
```css
*, *::before, *::after {
    box-sizing: border-box;
}

body {
    margin: 0;
    height: 100vh;
    overflow: hidden;
    position: relative;
    font: 12px/16px Roboto, "Open Sans", sans-serif;
    color: #000;
    background: #fff;
}

button, input, select, textarea {
    font: inherit;
    color: inherit;
    border: none;
    background: none;
    padding: 0;
    margin: 0;
    outline: none;
}

ul {
    list-style: none;
    margin: 0;
    padding: 0;
}

h1, h2, p {
    margin: 0;
    font-size: 12px;
    font-weight: normal;
}

.sprite {
    position: absolute;
    width: 0;
    height: 0;
}

.icon {
    width: 16px;
    height: 16px;
    flex: none;
}

.app {
    height: 100vh;
    display: flex;
    flex-direction: column;
}

/* Title bars */
.titlebar {
    display: flex;
    align-items: center;
    gap: 5px;
    color: #444f5c;
}

.main-title {
    height: 22px;
    padding: 0 3px 0 2px;
    gap: 8px;
    border-top: 1px solid #4c5058;
    background: linear-gradient(#b9c9d9, #d6e3f0);
}

.title-text {
    flex: 1;
}

.win-buttons {
    display: flex;
    gap: 2px;
}

.win-buttons button {
    width: 31px;
    height: 17px;
    display: flex;
    align-items: center;
    justify-content: center;
    border: 1px solid #7f92b0;
    border-radius: 2px;
    background: linear-gradient(#c9d6e5, #bccbdd);
}

.win-buttons svg {
    width: 14px;
    height: 12px;
}

.win-buttons .close {
    border-color: #5b1a1a;
    background: linear-gradient(#e0a092 45%, #bb3c24 50%, #cf6a4c);
}

.menubar {
    height: 19px;
    display: flex;
    gap: 13px;
    padding: 0 7px;
    color: #6c6f78;
    border-bottom: 1px solid #b1b5cb;
    background: linear-gradient(#fff, #ecf0f8 38%, #d6dcee 40%, #e2e5f6);
}

.main-menu {
    padding-top: 2px;
}

/* Toolbars */
.toolbar {
    height: 27px;
    flex: none;
    display: flex;
    align-items: center;
}

.toolbar button {
    width: 26px;
    height: 24px;
    display: flex;
    align-items: center;
    justify-content: center;
}

.sep {
    width: 1px;
    height: 21px;
    margin: 0 5px 0 2px;
    background: #85858a;
}

.glossy {
    background: linear-gradient(#fff 32%, #f7f7f7 34%, #f1f2f4);
    border-bottom: 1px solid #cfcfcf;
}

.flat {
    padding-left: 2px;
    background: #f5f5f5;
    border-top: 1px solid #dcdcd9;
}

.main-toolbar {
    height: 28px;
}

.doc-tabs {
    height: 34px;
    flex: none;
    display: flex;
    align-items: center;
    padding: 2px 4px 0;
    border-top: 4px solid #efefef;
}

.doc-tabs button {
    display: flex;
    align-items: center;
    gap: 4px;
}

.doc-tabs .doc-home {
    width: 62px;
}

.doc-tabs .doc-explorer {
    width: 92px;
}

.doc-explorer .icon:last-child,
.doc-current .icon:last-child {
    margin-left: auto;
}

.doc-tabs .doc-current {
    width: 214px;
    height: 27px;
    padding: 0 0 0 4px;
    border: 1px solid #66666a;
    border-radius: 3px;
    background: linear-gradient(#dedede, #ededed 40%, #e3e3e3);
}

.doc-bar {
    height: 30px;
    flex: none;
    display: flex;
    align-items: center;
    gap: 4px;
    margin: 3px 2px 0;
    padding: 0 10px 0 9px;
    background: linear-gradient(to right, #828282, #9c9c9c 25%);
}

.doc-bar h1 {
    flex: 1;
}

.doc-bar button {
    display: flex;
    align-items: center;
    gap: 5px;
    height: 24px;
}

.doc-save {
    font-size: 13px;
}

.doc-bar .doc-close {
    border-left: 1px solid #555;
    margin-left: 6px;
    padding-left: 10px;
}

/* Tabs of the campaign */
.tabs {
    height: 26px;
    flex: none;
    display: flex;
    align-items: flex-end;
    margin: 2px 5px 0 2px;
    position: relative;
    z-index: 1;
}

.tabs button,
.palette-tabs button,
.content-tabs button {
    display: flex;
    align-items: center;
    border: 1px solid #88898f;
    background: linear-gradient(#f2f2f2, #e6e6e6 48%, #d4d4d4 52%, #dcdcdc);
}

.tabs button {
    height: 24px;
    gap: 13px;
    padding: 0 9px 0 11px;
}

.tabs button:nth-child(2) {
    margin-left: 1px;
    padding: 0 8px 0 10px;
    border-right: none;
}

.tabs .active {
    height: 26px;
    gap: 14px;
    padding: 0 10px 0 13px;
    background: #fff;
    border-bottom: none;
}

.workspace {
    flex: 1;
    min-height: 0;
    display: grid;
    grid-template-columns: 376px 1fr;
    gap: 12px;
    margin: -1px 4px 1px 2px;
    padding: 10px 9px 6px;
    border: 1px solid #88898f;
}

.sidebar {
    display: flex;
    flex-direction: column;
    min-height: 0;
}

.workflow-list {
    height: 96px;
    flex: none;
    margin-top: 5px;
    border: 1px solid #88898f;
    font-size: 11px;
}

.workflow-list li {
    display: flex;
    align-items: center;
    gap: 4px;
    padding-left: 3px;
    background: #f0f0f0;
    white-space: nowrap;
}

.palette-tabs {
    display: flex;
    align-items: flex-end;
    margin-top: 3px;
    position: relative;
    z-index: 1;
}

.palette-tabs button {
    width: 36px;
    height: 25px;
    justify-content: center;
}

.palette-tabs .active {
    width: 42px;
    height: 27px;
    border-bottom: none;
    background: #fff;
}

.palette {
    flex: 1;
    width: 374px;
    margin-top: -1px;
    padding: 3px;
    border: 1px solid #88898f;
}

.palette-inner {
    height: 100%;
    border: 1px solid #88898f;
}

.palette h2 {
    height: 21px;
    line-height: 23px;
    border-bottom: 1px solid #d5d5d5;
    background: linear-gradient(#fff 40%, #f5f6f8 42%);
}

.palette li {
    height: 20px;
    display: flex;
    align-items: center;
    gap: 3px;
    padding-left: 1px;
}

.palette .selected {
    background: #efefef;
}

/* Workflow diagram */
.diagram {
    display: flex;
    flex-direction: column;
    min-width: 0;
    padding-top: 7px;
    padding-bottom: 9px;
}

.label-row {
    display: flex;
    align-items: center;
    gap: 12px;
    color: #d01f2b;
}

.combo {
    flex: 1;
    height: 20px;
    display: flex;
    align-items: center;
    border: 1px solid #a9abaf;
    padding-right: 4px;
}

.combo select {
    flex: 1;
    height: 18px;
    appearance: none;
    border-right: 1px solid #a9abaf;
    margin-right: 4px;
}

.diagram .toolbar {
    margin: 5px 0;
    height: 27px;
    padding-left: 3px;
}

.canvas {
    flex: 1;
    display: grid;
    grid-template: 1fr 17px / 1fr 17px;
    border: 1px solid #a9abaf;
}

.canvas-area {
    background: linear-gradient(#e4e7ef 150px, #d9dce0 150px, #d9dce0 449px, #e4e7ef 449px);
    border-right: 4px solid #e4e5e9;
    border-bottom: 1px solid #fff;
}

/* Scroll bars */
.scroll-v, .scroll-h {
    display: flex;
    justify-content: space-between;
    background: #efefef;
}

.scroll-v {
    flex-direction: column;
    width: 17px;
}

.arrow {
    width: 17px;
    height: 17px;
    flex: none;
    background: #4a4a4a;
    clip-path: polygon(4px 11px, 8px 7px, 9px 7px, 13px 11px);
}

.arrow.down {
    clip-path: polygon(4px 7px, 13px 7px, 9px 11px, 8px 11px);
}

.arrow.left {
    clip-path: polygon(10px 4px, 10px 12px, 6px 8px);
}

.arrow.right {
    clip-path: polygon(6px 4px, 6px 12px, 10px 8px);
}

.scroll-v .thumb {
    height: 126px;
    margin: 1px 1px auto;
    border: 1px solid #9a9a9a;
    border-radius: 2px;
    background: repeating-linear-gradient(#666 0 1px, transparent 1px 3px) center / 8px 8px no-repeat, linear-gradient(to right, #f3f3f3 45%, #dadada 55%, #bdbec1);
}

.scroll-h .thumb {
    width: 36%;
    margin: 1px auto 1px 1px;
    border: 1px solid #9a9a9a;
    border-radius: 2px;
    background: repeating-linear-gradient(to right, #666 0 1px, transparent 1px 3px) center / 8px 7px no-repeat, linear-gradient(#f3f3f3 45%, #dadada 55%, #c9cacc);
}

.grip {
    background: radial-gradient(circle, #b5b5b5 1px, transparent 1px) right bottom / 4px 4px;
    clip-path: polygon(100% 20%, 100% 100%, 20% 100%);
}

.bottom-tabs {
    height: 20px;
    flex: none;
    display: flex;
    padding-left: 8px;
    border-top: 1px solid #000;
    background: #9f9f9f;
}

.bottom-tabs button {
    height: 15px;
    margin-top: 1px;
    padding: 0 8px;
    border-right: 1px solid #e8e8e8;
}

.bottom-tabs .active {
    height: 17px;
    margin-top: -1px;
    padding: 0 7px;
    border-right: 2px solid #000;
    border-bottom: 1px solid #000;
    background: #f4f4f4;
}

.diagram .bottom-tabs {
    margin-top: 5px;
}

/* Status bar */
.statusbar {
    height: 22px;
    flex: none;
    display: flex;
    align-items: center;
    justify-content: flex-end;
    font: 10px/16px "Liberation Sans", sans-serif;
    color: #222;
    background: #f0eceb;
    border-top: 1px solid #88898f;
    padding-right: 2px;
}

.statusbar .st-pos {
    width: 111px;
    text-align: center;
    border-left: 1px solid #d2cecd;
    border-right: 1px solid #000;
}

.statusbar .st-ins {
    width: 48px;
    text-align: center;
    border-right: 1px solid #000;
}

.st-icon {
    display: flex;
    padding: 0 9px 0 7px;
}

.statusbar .grip {
    width: 10px;
    height: 12px;
}

/* Task bar */
.taskbar {
    height: 30px;
    flex: none;
    display: flex;
    border-top: 1px solid #3b4658;
    background: linear-gradient(to right, #7f95b3 50px, #a6bfdc 62px, #a6bfdc calc(100% - 225px), #8094b0 calc(100% - 190px));
}

.taskbar button {
    width: 43px;
    height: 29px;
    margin: 0 1px 0 2px;
    display: flex;
    align-items: center;
    justify-content: center;
    position: relative;
}

.taskbar button svg {
    width: 18px;
    height: 18px;
}

.taskbar .start {
    width: 54px;
}

.taskbar .start svg {
    position: absolute;
    width: 36px;
    height: 36px;
    top: -6px;
    left: 7px;
}

.taskbar .open {
    border: 1px solid #4d6480;
    border-radius: 3px;
    background: linear-gradient(135deg, #e3ecf6, #b3c8e0 60%, #bdd0e6);
}

.taskbar .stack {
    padding-right: 5px;
    box-shadow: inset -4px 0 #b5cae1, inset -5px 0 #4d6480;
}

.taskbar .current {
    background: linear-gradient(#fbfdff, #d9e7f5);
}

.office b {
    position: absolute;
    left: 14px;
    font-size: 9px;
    line-height: 18px;
    color: #fff;
}

.office.open b {
    left: 13px;
}

.office.stack b {
    left: 10px;
}

.taskbar .onenote svg { color: #80397b; }
.taskbar .outlook svg { color: #0072c6; }
.taskbar .powerpoint svg { color: #d24726; }
.taskbar .word svg { color: #2a579a; }
.taskbar .excel svg { color: #1e7145; }

.tray {
    margin-left: auto;
    display: flex;
    align-items: center;
    gap: 8px;
    color: #fff;
}

.tri {
    border: 4px solid transparent;
    border-top: none;
    border-bottom: 4px solid #fff;
}

.tray .tri {
    margin-right: 4px;
}

.combo .tri,
.split .tri {
    border-top: 4px solid #999;
    border-bottom: none;
}

.tray time {
    margin: 0 4px 0 18px;
}

.tray .show-desktop {
    width: 14px;
    margin: 0;
    border: 1px solid #45546b;
    background: linear-gradient(135deg, #9fb0c6, #56657b);
}

/* Windows */
.window {
    position: absolute;
    display: flex;
    flex-direction: column;
    padding: 0 7px 8px;
    border: 1px solid #3c4148;
    border-radius: 6px 6px 0 0;
    background: linear-gradient(#bfccda, #d5e3f1 28px, #d7e4f2);
}

.window > .titlebar {
    height: 28px;
    flex: none;
    padding: 5px 2px 0 1px;
}

.client {
    flex: 1;
    min-height: 0;
    display: flex;
    flex-direction: column;
    background: #fff;
}

.delivery {
    top: 182px;
    right: 254px;
    bottom: 120px;
    left: 413px;
}

.delivery .menubar {
    height: 20px;
    flex: none;
}

.delivery .client > .toolbar {
    height: 32px;
    border-top: 6px solid #eee;
    margin: 0 2px;
    padding-left: 5px;
}

.delivery .client > .toolbar button {
    width: 25px;
}

.delivery .client > .toolbar .wide {
    width: auto;
    gap: 4px;
    padding-right: 8px;
}

.delivery-body {
    flex: 1;
    min-height: 0;
    display: flex;
    flex-direction: column;
    margin: 3px 2px 0;
    padding: 9px 5px 8px 3px;
    border-top: 1px solid #999;
}

.delivery fieldset {
    flex: none;
    display: grid;
    grid-template-columns: 83px 1fr;
    row-gap: 4px;
    align-items: start;
    margin: 0;
    padding: 4px 7px 8px 9px;
    border: 1px solid #dcdcdc;
    border-radius: 3px;
}

.delivery legend {
    padding: 0;
}

.delivery fieldset a {
    color: #1414d8;
    line-height: 20px;
}

.delivery fieldset input,
.to-box {
    height: 22px;
    border: 1px solid #a9abaf;
    background: #fff;
}

.delivery fieldset input {
    padding: 0 2px;
}

.to-box {
    height: 39px;
    display: flex;
}

.to-box textarea {
    flex: 1;
    padding: 1px;
    resize: none;
}

.delivery fieldset .spaced {
    margin-top: 9px;
}

.scroll-v .arrow {
    opacity: .6;
}

.scroll-v.dark .arrow {
    opacity: 1;
}

.content-tabs {
    display: flex;
    margin-top: 4px;
    position: relative;
    z-index: 1;
}

.content-tabs .active {
    width: 134px;
    height: 26px;
    gap: 15px;
    padding-left: 13px;
    background: #fff;
    border-bottom: none;
}

.content-panel {
    flex: 1;
    min-height: 0;
    display: flex;
    flex-direction: column;
    margin-top: -1px;
    padding: 10px 3px 7px 10px;
    border: 1px solid #88898f;
}

.html-editor {
    flex: 1;
    display: flex;
    justify-content: flex-end;
    margin: 6px 1px 5px 0;
    border: 1px solid #88898f;
    border-right-color: #e3e3e3;
    border-bottom-color: #e3e3e3;
}

.checks {
    display: flex;
    gap: 8px;
    padding-top: 6px;
}

.checks label {
    display: flex;
    align-items: center;
    gap: 3px;
}

.checks input {
    appearance: none;
    width: 13px;
    height: 13px;
    border: 1px solid #8a8f94;
    background: #e3e5e8;
    box-shadow: inset 0 0 0 2px #f4f4f4;
}

.dialog-buttons {
    display: flex;
    justify-content: flex-end;
    gap: 8px;
}

.push {
    width: 68px;
    height: 22px;
    border: 1px solid #707070;
    border-radius: 3px;
    background: linear-gradient(#f3f3f3 48%, #dedede 52%, #cfcfcf);
}

.push.default {
    border: 2px solid #3c8dab;
}

.delivery .dialog-buttons {
    padding: 5px 5px 0 0;
}

.redacted {
    position: absolute;
    top: 289px;
    left: 507px;
    width: 246px;
    height: 33px;
    background: #ee1c25;
}

/* Subject editor */
.subject-dialog {
    top: 341px;
    left: 560px;
    width: 560px;
    height: 339px;
    border-color: #14191f;
    background: linear-gradient(#98b3cf, #bad1e8 28px, #cfe1f4 110px, #b7d0e9 122px);
}

.subject-dialog .titlebar {
    color: #111;
}

.subject-dialog .client {
    padding: 9px 7px 0;
    border: 1px solid #efefef;
}

.rule-title {
    display: flex;
    align-items: center;
    gap: 3px;
}

.rule-title::after {
    content: "";
    flex: 1;
    border-top: 1px solid #999;
}

.subject-dialog .toolbar {
    margin: 4px 0 5px;
}

.subject-dialog .split {
    width: 28px;
    height: 24px;
    margin-left: 6px;
    gap: 1px;
    border: 1px solid #b5b5b5;
    border-radius: 3px;
    background: #f9f9f9;
}

.split .tri {
    border-top-color: #000;
}

.code {
    height: 199px;
    flex: none;
    display: flex;
    border: 1px solid #a9abaf;
    background: linear-gradient(to right, #c6c6c6 13px, #fff 13px, #fff 18px, #eee 18px, #eee 19px, #fff 19px);
}

.code code {
    flex: 1;
    padding: 2px 0 0 20px;
    font: 12px/16px "Liberation Mono", monospace;
}

.code code span {
    color: #128080;
}

.subject-dialog .dialog-buttons {
    padding-top: 10px;
}

/* Menus */
.menu {
    position: absolute;
    padding: 2px;
    border: 1px solid #979797;
    background: linear-gradient(to right, #f0f0f0 29px, #e0e0e0 29px, #e0e0e0 30px, #f0f0f0 30px);
    box-shadow: 3px 3px 3px rgba(0, 0, 0, .45);
}

.insert-menu {
    top: 86px;
    left: 232px;
    width: 199px;
}

.sub-menu {
    top: 182px;
    left: 425px;
    width: 243px;
}

.menu li {
    height: 22px;
    display: flex;
    align-items: center;
    padding: 0 9px 0 32px;
}

.menu .sub {
    justify-content: space-between;
}

.menu .sub::after {
    content: "";
    border: 4px solid transparent;
    border-left-color: #000;
    border-right: none;
}

.menu .hot {
    border: 1px solid #aecff7;
    border-radius: 3px;
    padding: 0 8px 0 31px;
    background: linear-gradient(#f2f5fa, #e6ecf5);
}

.menu .line {
    height: 8px;
    margin-left: 28px;
    padding: 0;
    background: linear-gradient(#e0e0e0, #e0e0e0) center / 100% 1px no-repeat;
}

/* Field picker */
.picker {
    position: absolute;
    top: 643px;
    left: 710px;
    width: 568px;
    height: 250px;
    overflow: hidden;
    display: flex;
    flex-direction: column;
    background: #fff;
}

.find-row {
    height: 18px;
    flex: none;
    display: flex;
    align-items: flex-start;
    padding-left: 4px;
}

.find-row svg {
    width: 14px;
    height: 8px;
    margin-right: 8px;
}

.find-row label {
    line-height: 6px;
    width: 32px;
}

.find-box {
    flex: 1;
    height: 15px;
    padding: 2px 1px;
    border-left: 1px solid #999;
    border-bottom: 1px solid #999;
}

.find-box input {
    display: block;
    width: 100%;
    height: 11px;
    border-left: 1px solid #000;
}

.tree-box {
    height: 200px;
    flex: none;
    display: flex;
    flex-direction: column;
    border: 1px solid #88898f;
    border-right: none;
}

.tree {
    flex: 1;
    min-height: 0;
    overflow: hidden;
    margin-left: 26px;
    border-left: 1px solid #eee;
}

.tree li {
    height: 16px;
    display: flex;
    align-items: center;
    gap: 8px;
    position: relative;
}

.tree li::before {
    content: "";
    width: 8px;
    margin-right: -5px;
    border-top: 1px solid #eee;
}

.tree svg {
    width: 10px;
    height: 12px;
}

.tree mark {
    color: inherit;
    background: #efefef;
}

.computed::after {
    content: "";
    position: absolute;
    left: 15px;
    bottom: 1px;
    width: 11px;
    height: 11px;
    border: 4px solid #e5a52f;
    border-radius: 50%;
    background: #fff1b8;
}

.required::after {
    content: "!";
    position: absolute;
    left: 22px;
    color: #d01f2b;
    font-size: 13px;
    font-weight: bold;
}

.tree-foot {
    height: 17px;
    flex: none;
    background: #efefef;
}

.picker p {
    display: flex;
    align-items: center;
    gap: 6px;
    padding-top: 3px;
}

.picker .dialog-buttons {
    padding-top: 10px;
    margin-right: -51px;
}

/* Red frames around the clicked items */
.callout {
    position: absolute;
    border: 5px solid #ee1c25;
}

.callout-button {
    top: 392px;
    left: 784px;
    width: 44px;
    height: 45px;
}

.callout-menu {
    top: 519px;
    left: 794px;
    width: 357px;
    height: 32px;
}

.callout-field {
    top: 765px;
    left: 733px;
    width: 126px;
    height: 32px;
}
```
